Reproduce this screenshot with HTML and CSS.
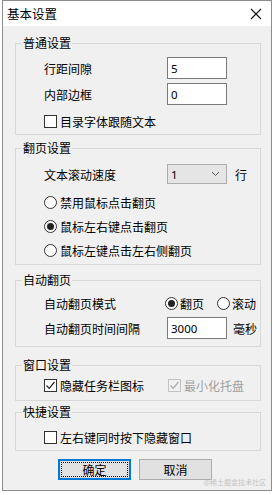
FILE: index.html
```html
<!DOCTYPE html>
<html lang="zh-CN">
<head>
<meta charset="utf-8">
<title>基本设置</title>
<link rel="stylesheet" href="styles.css">
</head>
<body>
<div class="window">
  <div class="titlebar">
    <span class="title">基本设置</span>
    <svg class="close" width="12" height="12" viewBox="0 0 12 12"><path d="M1 1 L11 11 M11 1 L1 11" stroke="#111" stroke-width="1.1" fill="none"/></svg>
  </div>
  <div class="client">
    <fieldset class="group g1">
      <legend>普通设置</legend>
      <div class="gbody">
        <div class="row h22"><span class="label">行距间隙</span><span class="input">5</span></div>
        <div class="row h22 mt4"><span class="label">内部边框</span><span class="input">0</span></div>
        <div class="row h18 mt7"><span class="check"></span><span class="ctext">目录字体跟随文本</span></div>
      </div>
    </fieldset>

    <fieldset class="group g2">
      <legend>翻页设置</legend>
      <div class="gbody">
        <div class="row h20"><span class="label">文本滚动速度</span><span class="combo"><span>1</span><svg class="chev" width="9" height="6" viewBox="0 0 9 6"><path d="M1 1 L4.5 4.5 L8 1" stroke="#555" stroke-width="1" fill="none"/></svg></span><span class="unit">行</span></div>
        <div class="row h24 mt6"><span class="radio"></span><span class="ctext">禁用鼠标点击翻页</span></div>
        <div class="row h24"><span class="radio on"></span><span class="ctext">鼠标左右键点击翻页</span></div>
        <div class="row h24"><span class="radio"></span><span class="ctext">鼠标左键点击左右侧翻页</span></div>
      </div>
    </fieldset>

    <fieldset class="group g3">
      <legend>自动翻页</legend>
      <div class="gbody">
        <div class="row h24"><span class="label lw121">自动翻页模式</span><span class="ritem"><span class="radio on"></span><span class="ctext">翻页</span></span><span class="ritem"><span class="radio"></span><span class="ctext">滚动</span></span></div>
        <div class="row h22 mt2"><span class="label">自动翻页时间间隔</span><span class="input">3000</span><span class="unit u6">毫秒</span></div>
      </div>
    </fieldset>

    <fieldset class="group g4">
      <legend>窗口设置</legend>
      <div class="gbody">
        <div class="row h18"><span class="citem"><span class="check on"><svg width="11" height="11" viewBox="0 0 11 11"><path d="M1.5 5.5 L4.2 8.3 L9.5 2" stroke="#222" stroke-width="1.2" fill="none"/></svg></span><span class="ctext">隐藏任务栏图标</span></span><span class="check dis"><svg width="11" height="11" viewBox="0 0 11 11"><path d="M1.5 5.5 L4.2 8.3 L9.5 2" stroke="#a8a8a8" stroke-width="1.2" fill="none"/></svg></span><span class="ctext dtext">最小化托盘</span></div>
      </div>
    </fieldset>

    <fieldset class="group g5">
      <legend>快捷设置</legend>
      <div class="gbody">
        <div class="row h18"><span class="check"></span><span class="ctext">左右键同时按下隐藏窗口</span></div>
      </div>
    </fieldset>

    <div class="buttons">
      <button class="btn primary"><span class="focus">确定</span></button>
      <button class="btn">取消</button>
    </div>
  </div>
  <span class="watermark">@稀土掘金技术社区</span>
</div>
</body>
</html>
```

FILE: styles.css
```css
* { box-sizing: border-box; }
html, body { margin: 0; padding: 0; background: #fff; }
body {
  font-family: "Noto Sans CJK SC", "Noto Sans", sans-serif;
  font-size: 12px;
  color: #000;
}
.window {
  position: relative;
  margin-left: 2px;
  width: 270px;
  height: 491px;
  border: 1px solid #8c8c8c;
  display: flex;
  flex-direction: column;
  background: #f0f0f0;
}
.titlebar {
  height: 25px;
  background: #fff;
  display: flex;
  align-items: center;
  justify-content: space-between;
  padding: 0 9px 0 4px;
  flex: none;
}
.title { font-size: 12.5px; line-height: 16px; }
.close { display: block; }
.client {
  flex: 1;
  padding: 9px 10px 0 12px;
  display: flex;
  flex-direction: column;
}
.group {
  margin: 0;
  padding: 0;
  border: 1px solid #d8d8d8;
  min-width: 0;
}
.group legend {
  margin-left: 6px;
  padding: 0 1px;
  line-height: 16px;
  height: 16px;
}
.gbody { padding-left: 28px; }
.g1 .gbody { padding-top: 6px; padding-bottom: 4px; }
.g2 { margin-top: 5px; }
.g2 .gbody { padding-top: 8px; padding-bottom: 2px; }
.g3 { margin-top: 7px; }
.g3 .gbody { padding-top: 3px; padding-bottom: 7px; }
.g4 { margin-top: 10px; }
.g4 .gbody { padding-top: 3px; padding-bottom: 6px; }
.g5 { margin-top: 3px; }
.g5 .gbody { padding-top: 8px; padding-bottom: 4px; }

.row { display: flex; align-items: center; white-space: nowrap; }
.h18 { height: 18px; }
.h20 { height: 20px; }
.h22 { height: 22px; }
.h24 { height: 24px; }
.mt2 { margin-top: 2px; }
.mt4 { margin-top: 4px; }
.mt6 { margin-top: 6px; }
.mt7 { margin-top: 7px; }

.label { width: 123px; flex: none; }
.lw121 { width: 121px; }
.input {
  width: 60px;
  height: 22px;
  flex: none;
  background: #fff;
  border: 1px solid #7a7a7a;
  padding-left: 3px;
  display: flex;
  align-items: center;
  font-family: "Noto Sans", "Liberation Sans", sans-serif;
  font-size: 11.5px;
}
.combo {
  width: 60px;
  height: 20px;
  flex: none;
  background: #e5e5e5;
  border: 1px solid #adadad;
  padding: 0 6px 0 3px;
  display: flex;
  align-items: center;
  justify-content: space-between;
  font-family: "Noto Sans", "Liberation Sans", sans-serif;
  font-size: 11.5px;
}
.chev { display: block; }
.unit { margin-left: 8px; }
.u6 { margin-left: 6px; }

.check {
  width: 13px;
  height: 13px;
  flex: none;
  border: 1px solid #333;
  background: #fff;
  display: flex;
  align-items: center;
  justify-content: center;
}
.check.dis { border-color: #c4c4c4; background: #f0f0f0; margin-left: 0; }
.check svg { display: block; }
.ctext { margin-left: 3px; }
.dtext { color: #a0a0a0; }
.citem { display: flex; align-items: center; width: 124px; flex: none; }

.radio {
  width: 13px;
  height: 13px;
  flex: none;
  border: 1px solid #333;
  border-radius: 50%;
  background: #fff;
  display: flex;
  align-items: center;
  justify-content: center;
}
.radio.on::before {
  content: "";
  width: 7px;
  height: 7px;
  border-radius: 50%;
  background: #222;
}
.ritem { display: flex; align-items: center; }
.ritem .ctext { margin-left: 2px; }
.ritem + .ritem { margin-left: 13px; }

.buttons {
  margin-top: 8px;
  padding-left: 43px;
  display: flex;
  gap: 8px;
}
.btn {
  width: 73px;
  height: 21px;
  padding: 0;
  margin: 0;
  background: #e1e1e1;
  border: 1px solid #adadad;
  font-family: "Noto Sans CJK SC", "Noto Sans", sans-serif;
  font-size: 12px;
  color: #000;
  display: flex;
  align-items: center;
  justify-content: center;
}
.btn.primary {
  border: 2px solid #0078d7;
  padding: 1px;
}
.btn .focus {
  width: 100%;
  height: 100%;
  border: 1px dotted #000;
  display: flex;
  align-items: center;
  justify-content: center;
}
.watermark {
  position: absolute;
  right: 5px;
  bottom: 4px;
  font-size: 7px;
  line-height: 8px;
  color: #c4c4c4;
}
```
